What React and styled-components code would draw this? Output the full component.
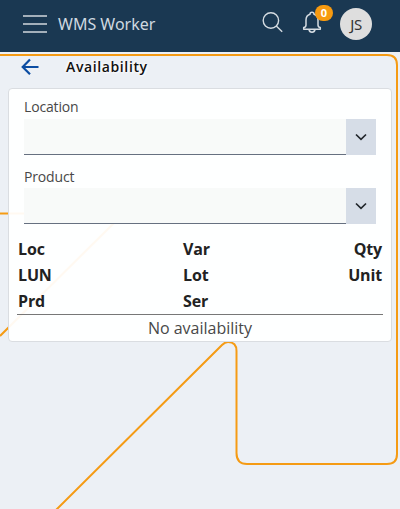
import React from "react";
import styled, { createGlobalStyle } from "styled-components";

const GlobalStyle = createGlobalStyle`
  * { box-sizing: border-box; }
  body { margin: 0; background: #ecf0f5; font-family: "Open Sans", "Noto Sans", sans-serif; color: #212529; }
`;

const Page = styled.div`
  position: relative;
  width: 400px;
  height: 509px;
  overflow: hidden;
  display: flex;
  flex-direction: column;
`;

const Backdrop = styled.svg`
  position: absolute;
  inset: 0;
  z-index: -1;
`;

const TopBar = styled.header`
  height: 52px;
  flex: none;
  display: flex;
  align-items: flex-start;
  background: #1a3852;
  color: #cfd8e0;
  padding: 0 28px 0 23px;
`;

const MenuIcon = styled.svg`
  flex: none;
  margin-top: 14px;
`;

const Brand = styled.div`
  flex: 1;
  margin-left: 11px;
  font: 400 16px/24px "Noto Sans", sans-serif;
  margin-top: 12px;
  white-space: nowrap;
`;

const SearchIcon = styled.svg`
  margin-top: 12px;
`;

const Notifications = styled.div`
  position: relative;
  width: 20px;
  height: 24px;
  margin: 11px 0 0 19px;
`;

const Badge = styled.span`
  position: absolute;
  left: 13px;
  top: -6px;
  width: 18px;
  height: 16px;
  border-radius: 8px;
  background: #f79a10;
  color: #fff;
  font-size: 11px;
  font-weight: 700;
  line-height: 16px;
  text-align: center;
`;

const Avatar = styled.div`
  width: 32px;
  height: 32px;
  margin: 8px 0 0 18px;
  border-radius: 50%;
  background: #dedede;
  color: #333;
  font: 400 15px/32px "Noto Sans", sans-serif;
  letter-spacing: -0.3px;
  text-align: center;
`;

const TitleRow = styled.div`
  height: 36px;
  flex: none;
  display: flex;
  align-items: flex-start;
  padding: 6px 0 0 21px;
`;

const Title = styled.h1`
  margin: -1px 0 0 27px;
  font-size: 14px;
  font-weight: 600;
  line-height: 20px;
  letter-spacing: 0.62px;
  color: #111;
  text-shadow: 1px 1px 2px #fff, -1px -1px 2px #fff;
`;

const Card = styled.main`
  height: 254px;
  flex: none;
  margin: 0 8px;
  padding: 8px 8px 0;
  background: rgba(255, 255, 255, 0.94);
  border: 1px solid #dadde1;
  border-radius: 4px;
`;

const Field = styled.div`
  height: ${(p) => p.$height}px;
  margin: 0 7px;
`;

const Label = styled.label`
  display: block;
  height: ${(p) => p.$height}px;
  font-size: 14px;
  line-height: 19px;
  letter-spacing: -0.15px;
  color: #484848;
`;

const Select = styled.div`
  display: flex;
  height: 36px;
`;

const SelectValue = styled.div`
  flex: 1;
  background: #f8faf9;
  border-bottom: 1px solid #667080;
`;

const SelectButton = styled.div`
  width: 30px;
  display: flex;
  align-items: center;
  justify-content: center;
  background: #d6dde7;
`;

const Headings = styled.div`
  display: grid;
  grid-template-columns: 165px 1fr 70px;
  grid-auto-rows: 26px;
  height: 79px;
  padding: 0 1px;
  border-bottom: 1px solid #777;
  font-size: 16px;
  font-weight: 700;
  line-height: 26px;
  letter-spacing: -0.15px;
  color: #222;
`;

const Heading = styled.span`
  text-align: ${(p) => (p.$end ? "right" : "left")};
`;

const EmptyNote = styled.div`
  line-height: 26px;
  font-size: 16px;
  text-align: center;
  color: #484848;
`;

function SelectField({ label, labelHeight, height }) {
  return (
    <Field $height={height}>
      <Label $height={labelHeight}>{label}</Label>
      <Select>
        <SelectValue />
        <SelectButton>
          <svg width="12" height="8" viewBox="0 0 12 8" fill="none" stroke="#22272c" strokeWidth="1.7">
            <path d="M1 1.500 6 6.300 11 1.500" />
          </svg>
        </SelectButton>
      </Select>
    </Field>
  );
}

export default function App() {
  return (
    <Page>
      <GlobalStyle />
      <Backdrop width="400" height="509" fill="none" stroke="#f59b14" strokeWidth="2">
        <path d="M0 55H387Q397 55 397 65V454Q397 464 387 464H247Q236.500 464 236.500 453V351Q236.500 342 228 342Q225 342 222 345L56 510" />
        <path d="M0 213.500H114Q124 213.500 117 220L0 336" />
      </Backdrop>
      <TopBar>
        <MenuIcon width="24" height="20" stroke="#a3afba" strokeWidth="2">
          <path d="M0 2H24M0 10H24M0 18H24" />
        </MenuIcon>
        <Brand>WMS Worker</Brand>
        <SearchIcon width="21" height="21" fill="none" stroke="#d5dce2" strokeWidth="1.400">
          <circle cx="8.900" cy="8.500" r="7.700" />
          <path d="M14.300 14 20.200 19.700" />
        </SearchIcon>
        <Notifications>
          <svg width="20" height="24" fill="none" stroke="#d5dce2" strokeWidth="1.500" strokeLinejoin="round">
            <path d="M8 3.200Q8 1.200 10 1.200Q12 1.200 12 3.200Q16 4.400 16 9V14Q16 16.300 18.300 16.500V18.200H1.700V16.500Q4 16.300 4 14V9Q4 4.400 8 3.200Z" />
            <path d="M7 18.500Q7.500 21.200 10 21.200T13 18.500" />
          </svg>
          <Badge>0</Badge>
        </Notifications>
        <Avatar>JS</Avatar>
      </TopBar>
      <TitleRow>
        <svg width="18" height="18" fill="none" stroke="#0b4da2" strokeWidth="2.200">
          <path d="M17.500 9H2M9 1.500 1.700 9 9 16.300" />
        </svg>
        <Title>Availability</Title>
      </TitleRow>
      <Card>
        <SelectField label="Location" labelHeight={22} height={70} />
        <SelectField label="Product" labelHeight={21} height={69} />
        <Headings>
          <Heading>Loc</Heading>
          <Heading>Var</Heading>
          <Heading $end>Qty</Heading>
          <Heading>LUN</Heading>
          <Heading>Lot</Heading>
          <Heading $end>Unit</Heading>
          <Heading>Prd</Heading>
          <Heading>Ser</Heading>
        </Headings>
        <EmptyNote>No availability</EmptyNote>
      </Card>
    </Page>
  );
}
